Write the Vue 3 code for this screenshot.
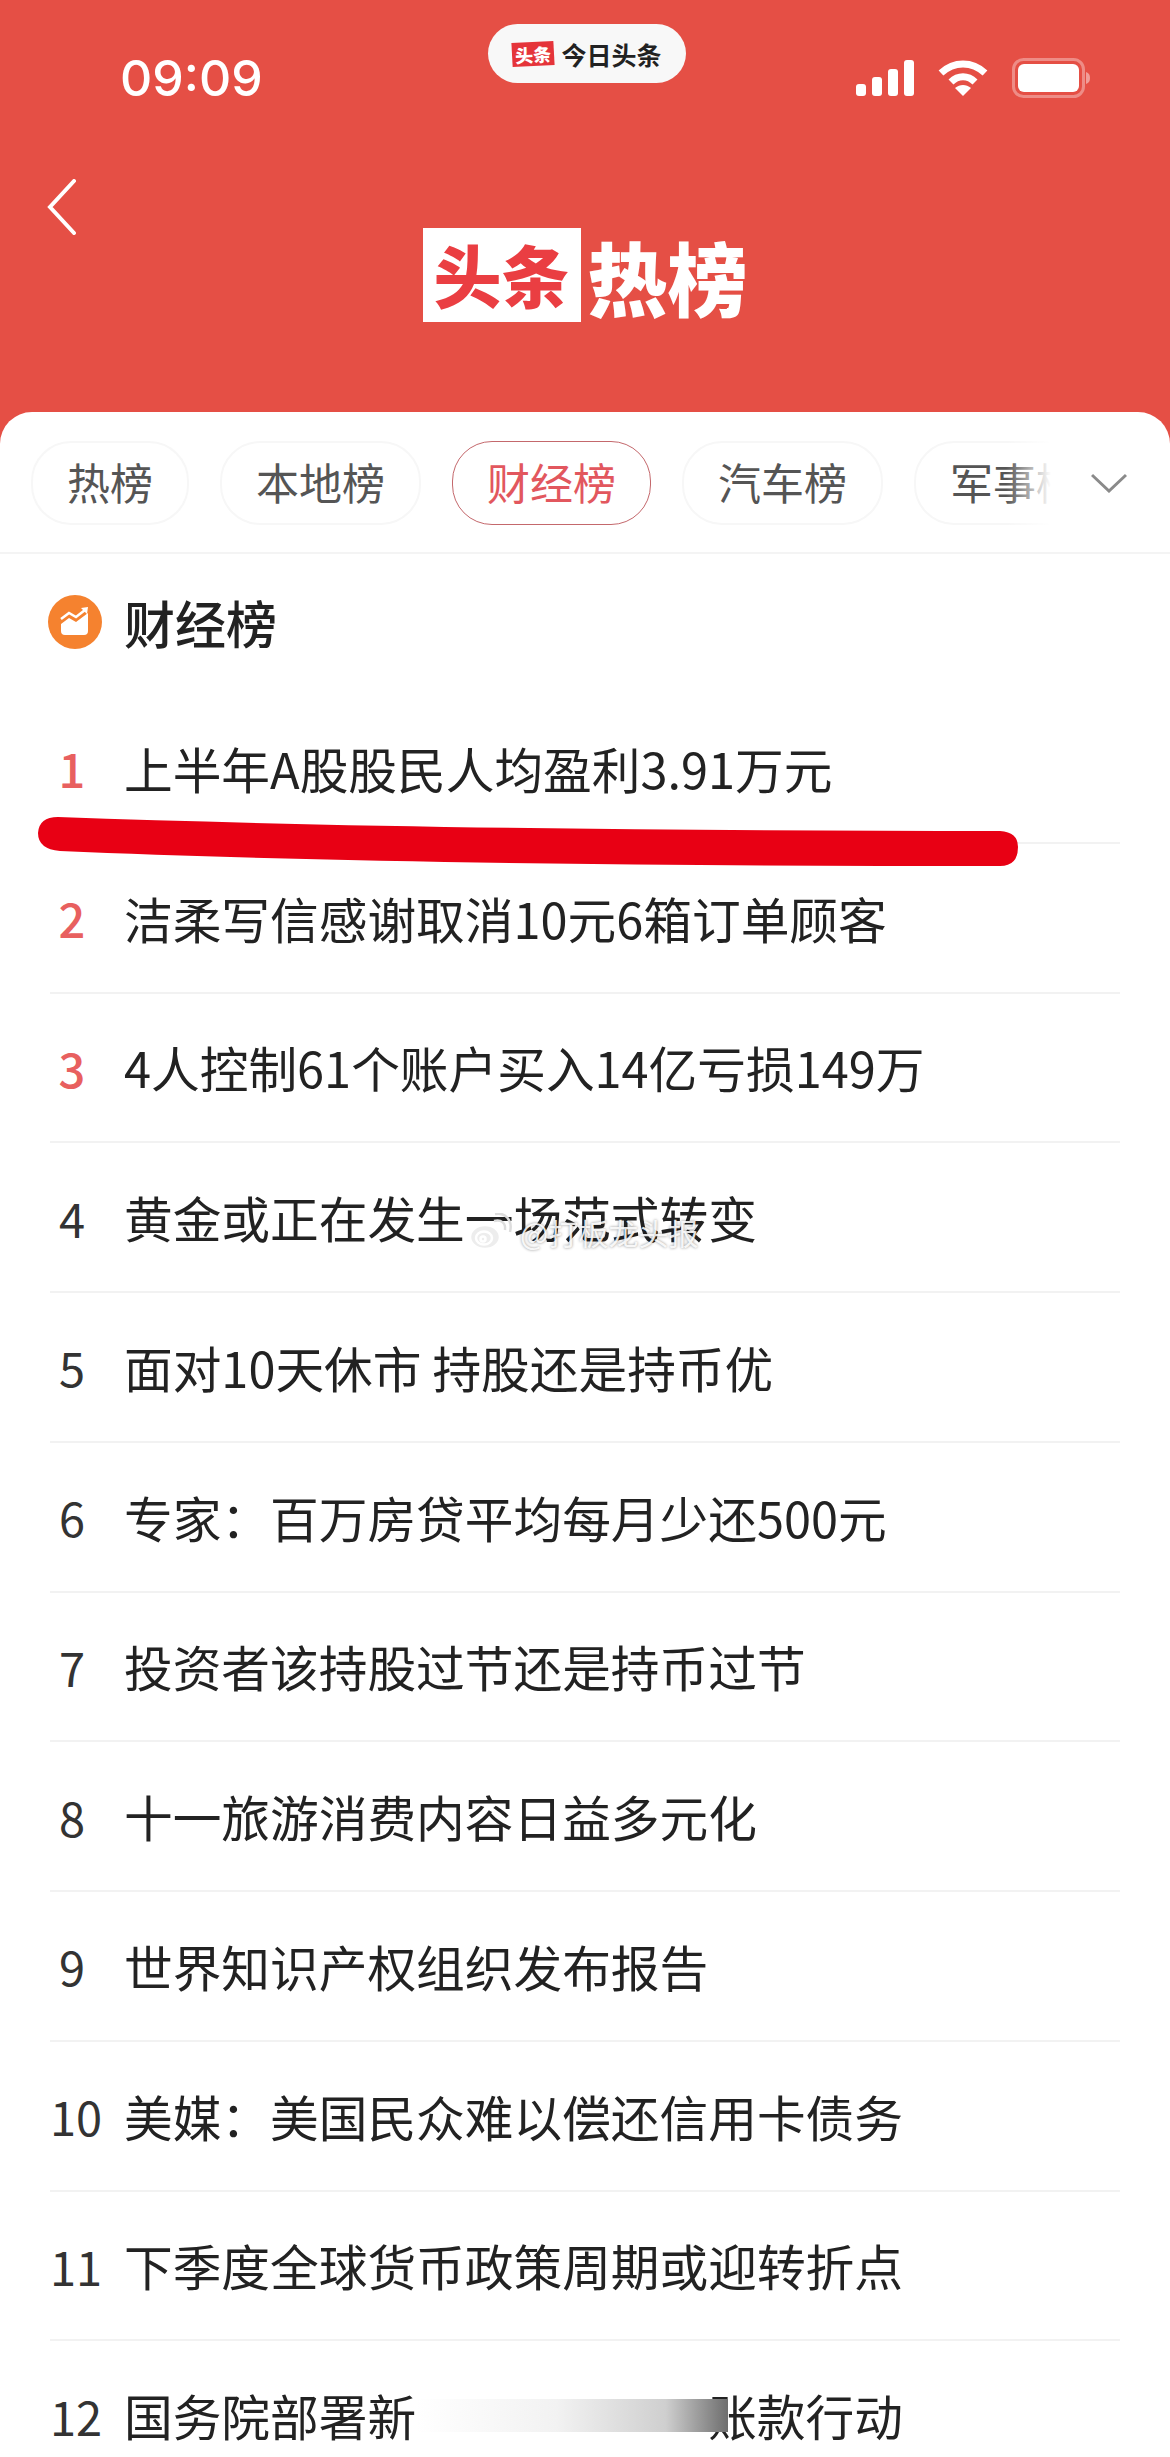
<script setup>
const tabs = [
  { label: "热榜" },
  { label: "本地榜" },
  { label: "财经榜", active: true },
  { label: "汽车榜" },
  { label: "军事榜" },
];

const rows = [
  { no: 1, title: "上半年A股股民人均盈利3.91万元" },
  { no: 2, title: "洁柔写信感谢取消10元6箱订单顾客" },
  { no: 3, title: "4人控制61个账户买入14亿亏损149万" },
  { no: 4, title: "黄金或正在发生一场范式转变" },
  { no: 5, title: "面对10天休市 持股还是持币优" },
  { no: 6, title: "专家：百万房贷平均每月少还500元" },
  { no: 7, title: "投资者该持股过节还是持币过节" },
  { no: 8, title: "十一旅游消费内容日益多元化" },
  { no: 9, title: "世界知识产权组织发布报告" },
  { no: 10, title: "美媒：美国民众难以偿还信用卡债务" },
  { no: 11, title: "下季度全球货币政策周期或迎转折点" },
  { no: 12, title: "国务院部署新", tail: "账款行动" },
];
</script>

<template>
  <div class="page">
    <header class="top">
      <div class="status">
        <span class="time">09:09</span>
        <div class="app-pill">
          <span class="app-logo">头条</span>
          <span class="app-name">今日头条</span>
        </div>
        <div class="status-icons">
          <svg width="58" height="36" viewBox="0 0 58 36" fill="#fff">
            <rect x="0" y="24" width="10" height="12" rx="3" />
            <rect x="16" y="17" width="10" height="19" rx="3" />
            <rect x="32" y="9" width="10" height="27" rx="3" />
            <rect x="48" y="0" width="10" height="36" rx="3" />
          </svg>
          <svg width="50" height="36" viewBox="0 0 50 36" fill="none" stroke="#fff" stroke-width="7">
            <path d="M3 13 C16 1 34 1 47 13" />
            <path d="M13 22 C20 15 30 15 37 22" />
            <path d="M25 36 L17 28 C22 24 28 24 33 28 Z" fill="#fff" stroke="none" />
          </svg>
          <svg width="78" height="40" viewBox="0 0 78 40">
            <rect x="1.5" y="1.5" width="70" height="37" rx="10" fill="none" stroke="#fff" stroke-opacity=".35" stroke-width="3" />
            <rect x="6" y="6" width="61" height="28" rx="6" fill="#fff" />
            <path d="M74 14 C77 15 78 17 78 20 C78 23 77 25 74 26 Z" fill="#fff" fill-opacity=".45" />
          </svg>
        </div>
      </div>
      <div class="nav">
        <svg class="back" width="30" height="56" viewBox="0 0 30 56" fill="none" stroke="#fff" stroke-width="4" stroke-linecap="round">
          <path d="M27 2 L3 28 L27 54" />
        </svg>
        <div class="brand">
          <span class="brand-box">头条</span>
          <span class="brand-text">热榜</span>
        </div>
      </div>
    </header>

    <main class="sheet">
      <div class="tabs">
        <div class="tabs-track">
          <span v-for="tab in tabs" :key="tab.label" class="tab" :class="{ 'tab--active': tab.active }">{{ tab.label }}</span>
        </div>
        <div class="tabs-more">
          <svg width="36" height="20" viewBox="0 0 36 20" fill="none" stroke="#8a8a8a" stroke-width="3">
            <path d="M1 2 L18 18 L35 2" />
          </svg>
        </div>
      </div>

      <div class="section-title">
        <svg width="54" height="54" viewBox="0 0 54 54">
          <circle cx="27" cy="27" r="27" fill="#f5822f" />
          <path d="M13 29 L21 23 L28 27 L40 18 V36 Q40 40 36 40 H17 Q13 40 13 36 Z" fill="#fff" />
          <path d="M13 24 L21 18 L28 22 L37 15" fill="none" stroke="#fff" stroke-width="2.5" />
          <path d="M33 13 L40 12 L39 19 Z" fill="#fff" />
        </svg>
        <span>财经榜</span>
      </div>

      <ul class="list">
        <li v-for="row in rows" :key="row.no" class="row" :class="{ 'row--hot': row.no <= 3 }">
          <span class="row-no">{{ row.no }}</span>
          <span class="row-title">
            {{ row.title }}<template v-if="row.tail"><i class="smear"></i>{{ row.tail }}</template>
          </span>

          <svg v-if="row.no === 1" class="scribble" width="980" height="50" viewBox="0 0 980 50">
            <path d="M20 0 C300 10 620 14 962 14 Q980 15 980 30 Q980 49 962 49 C640 49 300 46 22 34 Q0 32 0 16 Q1 0 20 0 Z" fill="#e80014" />
          </svg>

          <div v-if="row.no === 4" class="watermark">
            <svg width="44" height="38" viewBox="0 0 44 38" fill="none" stroke="#fff" stroke-width="2.5">
              <ellipse cx="17" cy="24" rx="15" ry="12" fill="#e6e6e6" fill-opacity=".7" />
              <ellipse cx="16" cy="25" rx="8" ry="6.5" />
              <circle cx="15" cy="26" r="2.5" />
              <path d="M26 8 C33 6 38 10 37 17" stroke="#ddd" />
              <path d="M27 1 C37 -1 45 7 42 19" stroke="#ddd" />
            </svg>
            <span>@打板龙头报</span>
          </div>
        </li>
      </ul>
    </main>
  </div>
</template>

<style scoped>
.page {
  width: 1170px;
  height: 2457px;
  overflow: hidden;
  background: #e54f45;
  font-family: "Noto Sans CJK SC", "Liberation Sans", sans-serif;
  display: flex;
  flex-direction: column;
}

.top {
  height: 412px;
  flex: none;
}

.status {
  display: grid;
  grid-template-columns: 1fr auto 1fr;
  padding: 24px 80px 0 120px;
}

.time {
  margin-top: 23px;
  color: #fff;
  font-family: Inter, "Liberation Sans", sans-serif;
  font-size: 50px;
  font-weight: 500;
  line-height: 62px;
}

.app-pill {
  width: 198px;
  height: 59px;
  box-sizing: border-box;
  padding-left: 24px;
  border-radius: 30px;
  background: #f8f8f8;
  display: flex;
  align-items: center;
  gap: 8px;
  margin-left: -37px;
}

.app-logo {
  width: 42px;
  height: 24px;
  background: #e5343a;
  color: #fff;
  font-size: 18px;
  font-weight: 900;
  line-height: 24px;
  text-align: center;
  transform: rotate(-3deg);
}

.app-name {
  color: #222;
  font-size: 25px;
  font-weight: 700;
  line-height: 30px;
}

.status-icons {
  display: flex;
  justify-content: flex-end;
  align-items: center;
  gap: 24px;
  margin-top: 34px;
  height: 40px;
}

.nav {
  display: grid;
  grid-template-columns: 1fr auto 1fr;
  padding: 0 0 0 47px;
  margin-top: 70px;
}

.brand {
  display: flex;
  align-items: center;
  gap: 7px;
  margin-top: 49px;
  margin-left: -47px;
}

.brand-box {
  width: 158px;
  height: 94px;
  background: #fff;
  color: #ea3e42;
  font-size: 68px;
  font-weight: 900;
  line-height: 92px;
  text-align: center;
}

.brand-text {
  color: #fff;
  font-size: 80px;
  font-weight: 900;
  line-height: 94px;
}

.sheet {
  flex: 1;
  background: #fff;
  border-radius: 32px 32px 0 0;
}

.tabs {
  height: 142px;
  box-sizing: border-box;
  padding-top: 29px;
  border-bottom: 2px solid #f4f4f4;
  display: flex;
  position: relative;
}

.tabs-track {
  width: 1056px;
  height: 84px;
  padding-left: 31px;
  box-sizing: border-box;
  display: flex;
  gap: 31px;
  overflow: hidden;
  position: relative;
}

.tabs-track::after {
  content: "";
  position: absolute;
  top: 0;
  right: 0;
  width: 50px;
  height: 84px;
  background: linear-gradient(to right, rgba(255, 255, 255, 0), #fff 90%);
}

.tab {
  flex: none;
  height: 84px;
  box-sizing: border-box;
  padding: 0 34px;
  border: 2px solid #f7f7f7;
  border-radius: 40px;
  color: #555;
  font-size: 43px;
  line-height: 76px;
}

.tab--active {
  border-width: 1px;
  border-color: #c4686c;
  color: #e2575e;
  line-height: 78px;
}

.tabs-more {
  flex: 1;
  display: flex;
  justify-content: center;
  align-items: center;
  height: 84px;
  padding-right: 8px;
}

.section-title {
  height: 140px;
  box-sizing: border-box;
  padding: 0 0 4px 48px;
  display: flex;
  align-items: center;
  gap: 22px;
  color: #222;
  font-size: 51px;
  font-weight: 500;
}

.list {
  list-style: none;
  margin: 0;
  padding: 0;
}

.row {
  position: relative;
  height: 149.75px;
  margin: 0 50px;
  box-sizing: border-box;
  border-bottom: 2px solid #f2f2f2;
  display: flex;
  align-items: center;
  color: #222;
}

.row-no {
  width: 44px;
  margin-right: 30px;
  text-align: center;
  font-size: 47px;
  color: #333;
}

.row--hot .row-no {
  color: #e8605f;
  font-weight: 500;
}

.row-title {
  display: flex;
  align-items: center;
  font-size: 48.7px;
  white-space: pre;
}

.smear {
  width: 312px;
  height: 33px;
  margin-right: -20px;
  position: relative;
  background: linear-gradient(to right, #fff 0%, #f2f2f2 45%, #cfcfcf 80%, #6e6e6e 100%);
}

.scribble {
  position: absolute;
  left: -12px;
  top: 123px;
}

.watermark {
  position: absolute;
  left: 418px;
  top: 69px;
  display: flex;
  align-items: center;
  gap: 8px;
  color: rgba(255, 255, 255, 0.88);
  font-size: 30px;
  line-height: 40px;
  text-shadow: 0 0 3px rgba(0, 0, 0, 0.45);
}
</style>

<style>
html,
body {
  margin: 0;
  background: #fff;
}
</style>
